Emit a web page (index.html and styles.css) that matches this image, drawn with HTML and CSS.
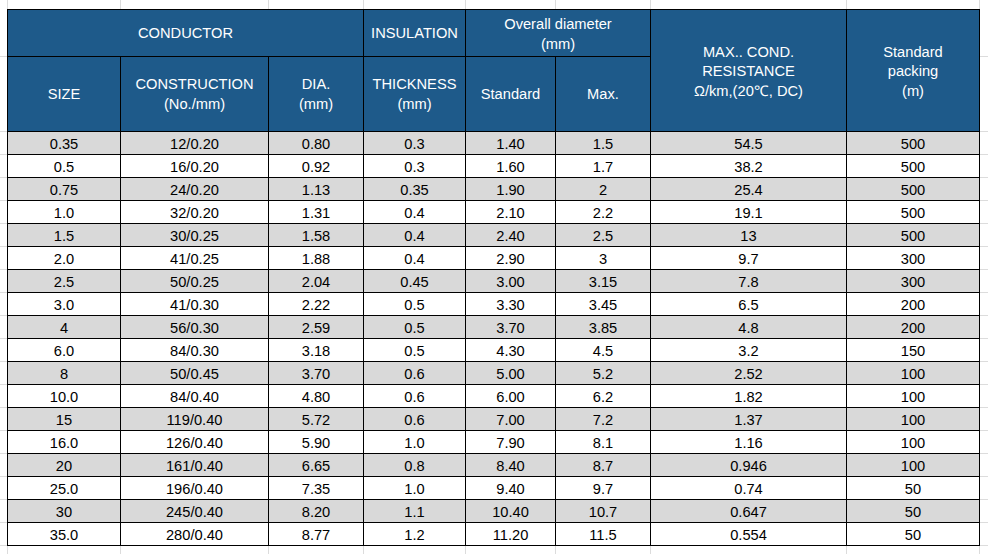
FILE: index.html
```html
<!DOCTYPE html>
<html lang="en">
<head>
<meta charset="utf-8">
<title>Cable specification</title>
<link rel="stylesheet" href="styles.css">
</head>
<body>
<div class="sheet">
  <div class="strip">
    <span class="gc m-left"></span>
    <span class="gc c1"></span><span class="gc c2"></span><span class="gc c3"></span><span class="gc c4"></span>
    <span class="gc c5"></span><span class="gc c6"></span><span class="gc c7"></span><span class="gc c8"></span>
  </div>
  <div class="middle">
    <div class="side">
      <span class="gr r1"></span><span class="gr r2"></span>
      <span class="gr rd"></span><span class="gr rd"></span><span class="gr rd"></span><span class="gr rd"></span><span class="gr rd"></span><span class="gr rd"></span>
      <span class="gr rd"></span><span class="gr rd"></span><span class="gr rd"></span><span class="gr rd"></span><span class="gr rd"></span><span class="gr rd"></span>
      <span class="gr rd"></span><span class="gr rd"></span><span class="gr rd"></span><span class="gr rd"></span><span class="gr rd"></span><span class="gr rd"></span>
    </div>
    <table class="spec">
      <colgroup>
        <col class="w1"><col class="w2"><col class="w3"><col class="w4"><col class="w5"><col class="w6"><col class="w7"><col class="w8">
      </colgroup>
      <thead>
        <tr class="h1">
          <th colspan="3">CONDUCTOR</th>
          <th>INSULATION</th>
          <th colspan="2" class="two">Overall diameter<br>(mm)</th>
          <th rowspan="2" class="three">MAX.. COND.<br>RESISTANCE<br>Ω/km,(20℃, DC)</th>
          <th rowspan="2" class="three">Standard<br>packing<br>(m)</th>
        </tr>
        <tr class="h2">
          <th>SIZE</th>
          <th>CONSTRUCTION<br>(No./mm)</th>
          <th>DIA.<br>(mm)</th>
          <th>THICKNESS<br>(mm)</th>
          <th>Standard</th>
          <th>Max.</th>
        </tr>
      </thead>
      <tbody>
        <tr class="alt"><td>0.35</td><td>12/0.20</td><td>0.80</td><td>0.3</td><td>1.40</td><td>1.5</td><td>54.5</td><td>500</td></tr>
        <tr><td>0.5</td><td>16/0.20</td><td>0.92</td><td>0.3</td><td>1.60</td><td>1.7</td><td>38.2</td><td>500</td></tr>
        <tr class="alt"><td>0.75</td><td>24/0.20</td><td>1.13</td><td>0.35</td><td>1.90</td><td>2</td><td>25.4</td><td>500</td></tr>
        <tr><td>1.0</td><td>32/0.20</td><td>1.31</td><td>0.4</td><td>2.10</td><td>2.2</td><td>19.1</td><td>500</td></tr>
        <tr class="alt"><td>1.5</td><td>30/0.25</td><td>1.58</td><td>0.4</td><td>2.40</td><td>2.5</td><td>13</td><td>500</td></tr>
        <tr><td>2.0</td><td>41/0.25</td><td>1.88</td><td>0.4</td><td>2.90</td><td>3</td><td>9.7</td><td>300</td></tr>
        <tr class="alt"><td>2.5</td><td>50/0.25</td><td>2.04</td><td>0.45</td><td>3.00</td><td>3.15</td><td>7.8</td><td>300</td></tr>
        <tr><td>3.0</td><td>41/0.30</td><td>2.22</td><td>0.5</td><td>3.30</td><td>3.45</td><td>6.5</td><td>200</td></tr>
        <tr class="alt"><td>4</td><td>56/0.30</td><td>2.59</td><td>0.5</td><td>3.70</td><td>3.85</td><td>4.8</td><td>200</td></tr>
        <tr><td>6.0</td><td>84/0.30</td><td>3.18</td><td>0.5</td><td>4.30</td><td>4.5</td><td>3.2</td><td>150</td></tr>
        <tr class="alt"><td>8</td><td>50/0.45</td><td>3.70</td><td>0.6</td><td>5.00</td><td>5.2</td><td>2.52</td><td>100</td></tr>
        <tr><td>10.0</td><td>84/0.40</td><td>4.80</td><td>0.6</td><td>6.00</td><td>6.2</td><td>1.82</td><td>100</td></tr>
        <tr class="alt"><td>15</td><td>119/0.40</td><td>5.72</td><td>0.6</td><td>7.00</td><td>7.2</td><td>1.37</td><td>100</td></tr>
        <tr><td>16.0</td><td>126/0.40</td><td>5.90</td><td>1.0</td><td>7.90</td><td>8.1</td><td>1.16</td><td>100</td></tr>
        <tr class="alt"><td>20</td><td>161/0.40</td><td>6.65</td><td>0.8</td><td>8.40</td><td>8.7</td><td>0.946</td><td>100</td></tr>
        <tr><td>25.0</td><td>196/0.40</td><td>7.35</td><td>1.0</td><td>9.40</td><td>9.7</td><td>0.74</td><td>50</td></tr>
        <tr class="alt"><td>30</td><td>245/0.40</td><td>8.20</td><td>1.1</td><td>10.40</td><td>10.7</td><td>0.647</td><td>50</td></tr>
        <tr><td>35.0</td><td>280/0.40</td><td>8.77</td><td>1.2</td><td>11.20</td><td>11.5</td><td>0.554</td><td>50</td></tr>
      </tbody>
    </table>
    <div class="side">
      <span class="gr r1"></span><span class="gr r2"></span>
      <span class="gr rd"></span><span class="gr rd"></span><span class="gr rd"></span><span class="gr rd"></span><span class="gr rd"></span><span class="gr rd"></span>
      <span class="gr rd"></span><span class="gr rd"></span><span class="gr rd"></span><span class="gr rd"></span><span class="gr rd"></span><span class="gr rd"></span>
      <span class="gr rd"></span><span class="gr rd"></span><span class="gr rd"></span><span class="gr rd"></span><span class="gr rd"></span><span class="gr rd"></span>
    </div>
  </div>
  <div class="strip">
    <span class="gc m-left"></span>
    <span class="gc c1"></span><span class="gc c2"></span><span class="gc c3"></span><span class="gc c4"></span>
    <span class="gc c5"></span><span class="gc c6"></span><span class="gc c7"></span><span class="gc c8"></span>
  </div>
</div>
</body>
</html>
```

FILE: styles.css
```css
* { box-sizing: border-box; }

html, body {
  margin: 0;
  padding: 0;
  background: #ffffff;
}

body {
  font-family: "Liberation Sans", Arial, sans-serif;
  font-size: 14.67px;
  color: #000;
  overflow: hidden;
  width: 988px;
  height: 554px;
}

.sheet {
  display: flex;
  flex-direction: column;
  width: 988px;
}

/* sheet gridlines above and below the table */
.strip {
  display: flex;
  height: 9px;
  flex: none;
}
.gc {
  display: block;
  height: 100%;
  border-right: 1px solid #dcdcdc;
  flex: none;
}
.m-left { width: 8px; }
.c1 { width: 113px; }
.c2 { width: 148px; }
.c3 { width: 95px; }
.c4 { width: 102px; }
.c5 { width: 90px; }
.c6 { width: 95px; }
.c7 { width: 196px; }
.c8 { width: 133px; }

.middle {
  display: flex;
  align-items: flex-start;
}

/* sheet gridlines left and right of the table */
.side {
  display: flex;
  flex-direction: column;
  width: 7px;
  flex: none;
}
.side:last-child { width: 8px; }
.gr {
  display: block;
  border-bottom: 1px solid #dcdcdc;
  flex: none;
}
.r1 { height: 48px; }
.r2 { height: 75px; }
.rd { height: 23px; }

/* the table itself */
.spec {
  border-collapse: collapse;
  table-layout: fixed;
  width: 973px;
  flex: none;
}
.w1 { width: 113px; }
.w2 { width: 148px; }
.w3 { width: 95px; }
.w4 { width: 102px; }
.w5 { width: 90px; }
.w6 { width: 95px; }
.w7 { width: 196px; }
.w8 { width: 133px; }

.spec th,
.spec td {
  border: 1px solid #000;
  padding: 0;
  text-align: center;
  vertical-align: middle;
  white-space: nowrap;
}

.spec th {
  background: #1e5a8a;
  color: #ffffff;
  font-weight: normal;
  line-height: 19.5px;
  padding-top: 1px;
}
.spec th.two { padding-top: 3px; }
.spec th.three { padding-top: 3px; }

.h1 { height: 47px; }
.h2 { height: 75px; }

.spec td {
  height: 23px;
  line-height: 17px;
  padding-top: 3px;
}

.spec tbody tr { height: 23px; }
.spec tr.alt td { background: #d9d9d9; }
```
